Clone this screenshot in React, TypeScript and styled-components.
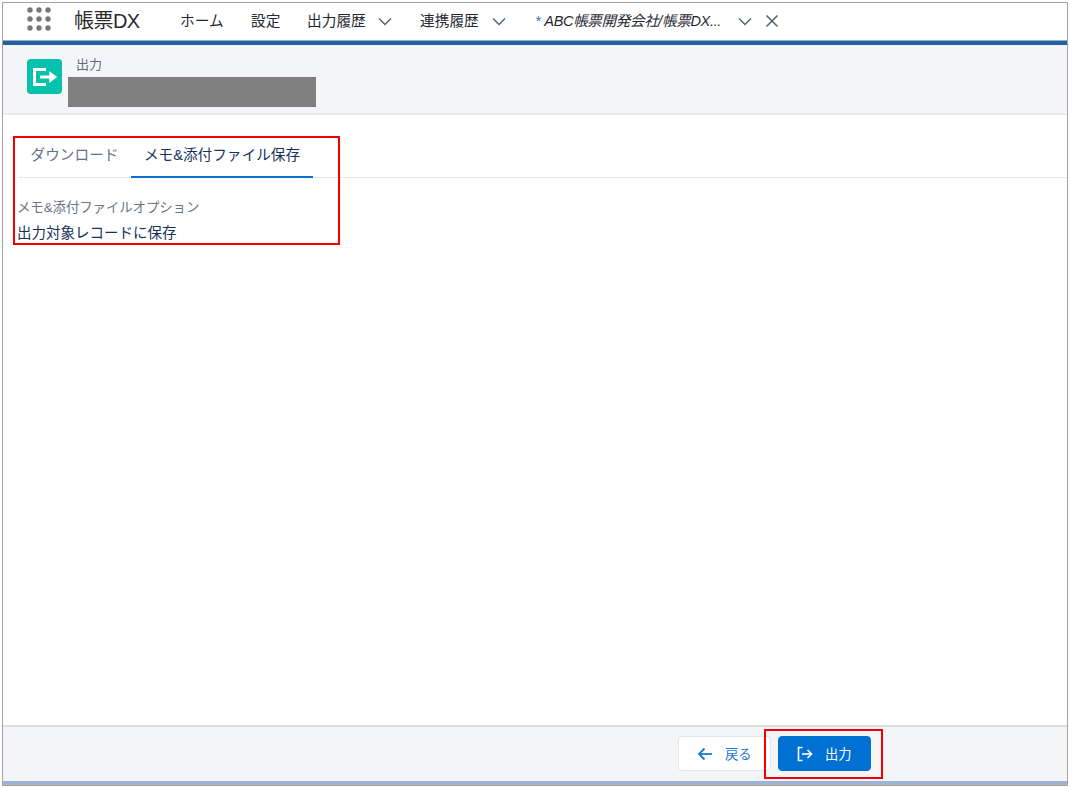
import React from "react";
import styled, { createGlobalStyle } from "styled-components";

const Global = createGlobalStyle`
  html, body { margin: 0; padding: 0; background: #fff; }
  body { font-family: "Liberation Sans", "Noto Sans CJK JP", sans-serif; color: #1f2d3d; }
`;
const Frame = styled.div`
  position: relative;
  box-sizing: border-box;
  width: 1070px;
  height: 788px;
  padding: 2px;
  background: #fff;
  display: flex;
  overflow: hidden;
`;
const Shell = styled.div`
  flex: 1;
  display: flex;
  flex-direction: column;
  border: 1px solid #a3a3a3;
  min-width: 0;
`;
const NavBar = styled.header`
  height: 32px;
  padding: 0 0 6px 23px;
  flex: none;
  display: flex;
  align-items: center;
  background: #fff;
  border-bottom: 4px solid #235f9e;
  box-shadow: inset 0 -1px 0 #8fb0cf;
`;
const Waffle = styled.svg`
  width: 26px;
  height: 26px;
  flex: none;
`;
const AppName = styled.div`
  margin-left: 22px;
  width: 106px;
  font-size: 20px;
  letter-spacing: -0.55px;
  color: #2b2b2b;
  flex: none;
`;
const NavItem = styled.div<{ $w: number }>`
  width: ${(p) => p.$w}px;
  flex: none;
  font-size: 14.7px;
  color: #1f2933;
  display: flex;
  align-items: center;
  white-space: nowrap;
`;
const Chevron = styled.svg<{ $ml: number }>`
  width: 16px;
  height: 16px;
  margin-left: ${(p) => p.$ml}px;
  margin-top: 6px;
  flex: none;
`;
const CloseIcon = styled.svg`
  width: 16px;
  height: 16px;
  margin-left: 11px;
  margin-top: 3px;
  flex: none;
`;
const TabTitle = styled.div`
  font-size: 14.55px;
  font-style: italic;
  letter-spacing: -0.35px;
  color: #1f2933;
  white-space: nowrap;
  width: 189px;
  flex: none;
`;
const Star = styled.span`
  color: #2a77c9;
  margin-right: 4px;
`;
const PageHeader = styled.section`
  height: 70px;
  flex: none;
  box-sizing: border-box;
  background: #f4f5f8;
  border-bottom: 2px solid #e8eaee;
  display: flex;
  padding: 14px 0 0 24px;
`;
const BadgeIcon = styled.div`
  width: 35px;
  height: 35px;
  border-radius: 4px;
  background: #06c2ac;
  display: flex;
  align-items: center;
  justify-content: center;
  flex: none;
`;
const TitleCol = styled.div`
  margin-left: 6px;
  display: flex;
  flex-direction: column;
`;
const Caption = styled.div`
  font-size: 13px;
  line-height: 14px;
  margin-left: 8px;
  margin-top: -1px;
  color: #5f6b7a;
`;
const Redacted = styled.div`
  width: 248px;
  height: 30px;
  margin-top: 5px;
  background: #808080;
`;
const Body = styled.main`
  flex: 1;
  background: #fff;
  padding-top: 19px;
  display: flex;
  flex-direction: column;
`;
const TabBar = styled.div`
  height: 44px;
  box-sizing: border-box;
  margin-left: 15px;
  display: flex;
  border-bottom: 1px solid #e5e7ec;
`;
const Tab = styled.div<{ $active?: boolean; $w: number }>`
  width: ${(p) => p.$w}px;
  box-sizing: border-box;
  height: 44px;
  display: flex;
  align-items: flex-start;
  justify-content: center;
  padding-top: 9px;
  font-size: 14.65px;
  color: ${(p) => (p.$active ? "#16325c" : "#66708a")};
  border-bottom: ${(p) => (p.$active ? "2px solid #0b6fd0" : "none")};
`;
const Section = styled.div`
  padding: 22px 0 0 15px;
`;
const FieldLabel = styled.div`
  font-size: 13.45px;
  line-height: 16px;
  letter-spacing: -0.1px;
  margin-left: -1px;
  color: #6b7488;
`;
const FieldValue = styled.div`
  font-size: 14.5px;
  line-height: 18px;
  margin-top: 8px;
  margin-left: -1px;
  color: #16325c;
`;
const Footer = styled.footer`
  height: 56px;
  flex: none;
  box-sizing: border-box;
  background: #f4f5f7;
  border-top: 2px solid #dcdcdc;
  display: flex;
  align-items: center;
  justify-content: flex-end;
  padding: 0 196px 1px 0;
  gap: 7px;
`;
const ScrollStrip = styled.div`
  height: 3px;
  flex: none;
  background: #9db4d6;
  border-bottom: 1px solid #b5b5b5;
`;
const BaseButton = styled.button`
  box-sizing: border-box;
  height: 35px;
  border-radius: 4px;
  display: flex;
  align-items: center;
  font-family: inherit;
  font-size: 13.3px;
  padding: 0;
`;
const BackButton = styled(BaseButton)`
  width: 93px;
  background: #fff;
  border: 1px solid #e4e6ea;
  color: #1b78d0;
  padding-left: 18px;
  gap: 12px;
`;
const PrimaryButton = styled(BaseButton)`
  width: 93px;
  background: #0070d2;
  border: 1px solid #0070d2;
  color: #fff;
  padding-left: 18px;
  gap: 12px;
`;
const RedBox = styled.div<{ $x: number; $y: number; $w: number; $h: number }>`
  position: absolute;
  left: ${(p) => p.$x}px;
  top: ${(p) => p.$y}px;
  width: ${(p) => p.$w}px;
  height: ${(p) => p.$h}px;
  box-sizing: border-box;
  border: 2px solid #f00000;
  pointer-events: none;
`;

const Chev = ({ ml }: { ml: number }) => (
  <Chevron $ml={ml} viewBox="0 0 16 16" fill="none" stroke="#55606c" strokeWidth="1.4">
    <path d="M2 4.5 8 10.5 14 4.5" />
  </Chevron>
);

const dots = [0, 1, 2].flatMap((r) => [0, 1, 2].map((c) => [c, r]));

export default function App() {
  return (
    <Frame>
      <Global />
      <Shell>
        <NavBar>
          <Waffle viewBox="0 0 26 26">
            {dots.map(([c, r]) => (
              <circle key={`${c}${r}`} cx={4 + c * 9} cy={4 + r * 9} r={2.7} fill="#777" />
            ))}
          </Waffle>
          <AppName>帳票DX</AppName>
          <NavItem $w={71}>ホーム</NavItem>
          <NavItem $w={56}>設定</NavItem>
          <NavItem $w={113}>
            出力履歴
            <Chev ml={11} />
          </NavItem>
          <NavItem $w={115}>
            連携履歴
            <Chev ml={12} />
          </NavItem>
          <TabTitle>
            <Star>*</Star>ABC帳票開発会社/帳票DX...
          </TabTitle>
          <Chev ml={13} />
          <CloseIcon viewBox="0 0 16 16" fill="none" stroke="#55606c" strokeWidth="1.5">
            <path d="M2.5 2.5 13.5 13.5M13.5 2.5 2.5 13.5" />
          </CloseIcon>
        </NavBar>
        <PageHeader>
          <BadgeIcon>
            <svg width="27" height="24" viewBox="0 0 27 24" fill="none" stroke="#fff" strokeWidth="3">
              <path d="M15 4.5H3.5V19.5H15" />
              <path d="M9 12H20" />
              <path d="M19 7.5V16.5L25 12Z" fill="#fff" strokeWidth="1.5" />
            </svg>
          </BadgeIcon>
          <TitleCol>
            <Caption>出力</Caption>
            <Redacted />
          </TitleCol>
        </PageHeader>
        <Body>
          <TabBar>
            <Tab $w={113}>ダウンロード</Tab>
            <Tab $w={182} $active>
              メモ&amp;添付ファイル保存
            </Tab>
          </TabBar>
          <Section>
            <FieldLabel>メモ&amp;添付ファイルオプション</FieldLabel>
            <FieldValue>出力対象レコードに保存</FieldValue>
          </Section>
        </Body>
        <Footer>
          <BackButton>
            <svg width="16" height="14" viewBox="0 0 16 14" fill="none" stroke="#1b78d0" strokeWidth="1.8">
              <path d="M15 7H2" />
              <path d="M7.5 1.5 2 7 7.5 12.5" />
            </svg>
            戻る
          </BackButton>
          <PrimaryButton>
            <svg width="16" height="16" viewBox="0 0 16 16" fill="none" stroke="#fff" strokeWidth="1.6">
              <path d="M5.5 1.5H1.5V14.5H5.5" />
              <path d="M5 8H14.5" />
              <path d="M10.5 4 14.5 8 10.5 12" />
            </svg>
            出力
          </PrimaryButton>
        </Footer>
        <ScrollStrip />
      </Shell>
      <RedBox $x={13} $y={136} $w={327} $h={109} />
      <RedBox $x={764} $y={729} $w={119} $h={50} />
    </Frame>
  );
}
